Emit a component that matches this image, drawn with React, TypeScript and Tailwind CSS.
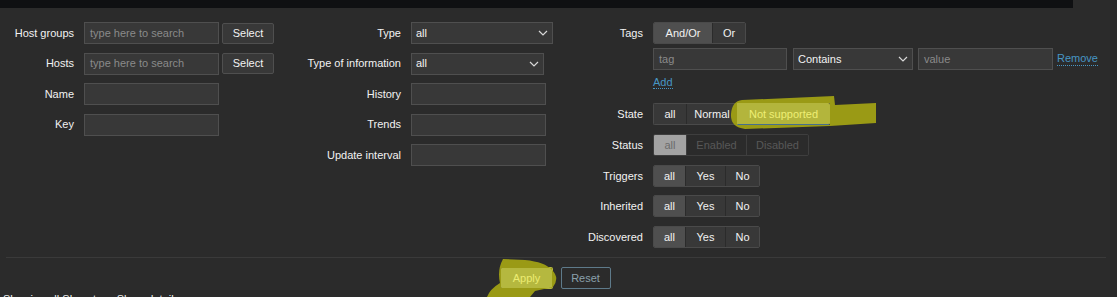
import React from 'react';

const label = 'text-right text-[#f2f2f2] whitespace-nowrap';

function TextBox({ w, placeholder }: { w: string; placeholder?: string }) {
  return (
    <div className={`${w} h-[22px] border border-[#4f4f4f] bg-[#383838] px-[5px] flex items-center text-[#8a8a8a]`}>
      {placeholder}
    </div>
  );
}

function Chevron() {
  return (
    <svg width="10" height="6" viewBox="0 0 10 6" className="shrink-0">
      <polyline points="1,1 5,5 9,1" fill="none" stroke="#d8d8d8" strokeWidth="1.2" />
    </svg>
  );
}

function Dropdown({ w, value }: { w: string; value: string }) {
  return (
    <div className={`${w} h-[22px] border border-[#4f4f4f] bg-[#383838] pl-[4px] pr-[4px] flex items-center justify-between text-[#f2f2f2]`}>
      <span>{value}</span>
      <Chevron />
    </div>
  );
}

function SelectBtn() {
  return (
    <div className="ml-[3px] w-[52px] h-[21px] border border-[#4f4f4f] bg-[#383838] rounded-[2px] flex items-center justify-center text-[#f2f2f2]">
      Select
    </div>
  );
}

type Seg = { text: string; w: string; active?: boolean };

function Segmented({ items, disabled }: { items: Seg[]; disabled?: boolean }) {
  return (
    <div className={`flex h-[22px] rounded-[2px] border ${disabled ? 'border-[#3e3e3e]' : 'border-[#4a4a4a]'} overflow-hidden w-fit`}>
      {items.map((s, i) => {
        let cls = 'bg-[#383838] text-[#f2f2f2]';
        if (s.active) cls = disabled ? 'bg-[#a3a3a3] text-[#6b6b6b]' : 'bg-[#4f4f4f] text-[#f2f2f2]';
        else if (disabled) cls = 'bg-[#2b2b2b] text-[#585858]';
        return (
          <div
            key={s.text}
            className={`${s.w} ${cls} ${i > 0 ? (disabled ? 'border-l border-[#3e3e3e]' : 'border-l border-[#2b2b2b]') : ''} flex items-center justify-center`}
          >
            {s.text}
          </div>
        );
      })}
    </div>
  );
}

const tri = (a: boolean) => [
  { text: 'all', w: 'w-[31px]', active: a },
  { text: 'Yes', w: 'w-[40px]' },
  { text: 'No', w: 'w-[34px]' },
];

export default function App() {
  return (
    <div className="relative w-[1117px] h-[297px] overflow-hidden bg-[#2b2b2b] font-['Liberation_Sans',Arial,sans-serif] text-[11px] leading-[13px]">
      <div className="h-[8px] w-[1073px] bg-[#0f1012]" />

      <div className="flex pt-[14px]">
        {/* left column */}
        <div className="w-[280px] grid grid-cols-[74px_auto] gap-x-[10px] gap-y-[8.5px] items-center content-start">
          <div className={label}>Host groups</div>
          <div className="flex items-center">
            <TextBox w="w-[135px]" placeholder="type here to search" />
            <SelectBtn />
          </div>
          <div className={label}>Hosts</div>
          <div className="flex items-center">
            <TextBox w="w-[135px]" placeholder="type here to search" />
            <SelectBtn />
          </div>
          <div className={label}>Name</div>
          <TextBox w="w-[135px]" />
          <div className={label}>Key</div>
          <TextBox w="w-[135px]" />
        </div>

        {/* middle column */}
        <div className="w-[280px] grid grid-cols-[121px_auto] gap-x-[10px] gap-y-[8.5px] items-center content-start">
          <div className={label}>Type</div>
          <Dropdown w="w-[142px]" value="all" />
          <div className={label}>Type of information</div>
          <Dropdown w="w-[133px]" value="all" />
          <div className={label}>History</div>
          <TextBox w="w-[135px]" />
          <div className={label}>Trends</div>
          <TextBox w="w-[135px]" />
          <div className={label}>Update interval</div>
          <TextBox w="w-[135px]" />
        </div>

        {/* right column */}
        <div className="flex flex-col">
          <div className="flex items-center">
            <div className={`w-[83px] mr-[10px] ${label}`}>Tags</div>
            <Segmented
              items={[
                { text: 'And/Or', w: 'w-[58px]', active: true },
                { text: 'Or', w: 'w-[33px]' },
              ]}
            />
          </div>
          <div className="flex items-center mt-[4px] ml-[93px]">
            <TextBox w="w-[134px]" placeholder="tag" />
            <div className="ml-[6px]">
              <Dropdown w="w-[120px]" value="Contains" />
            </div>
            <div className="ml-[5px]">
              <TextBox w="w-[135px]" placeholder="value" />
            </div>
            <span className="ml-[4px] text-[#4796c4] border-b border-dotted border-[#4796c4] leading-[13px]">Remove</span>
          </div>
          <div className="mt-[6px] ml-[93px] h-[16px]">
            <span className="text-[#4796c4] border-b border-dotted border-[#4796c4] leading-[13px]">Add</span>
          </div>

          <div className="flex items-center mt-[11px]">
            <div className={`w-[83px] mr-[10px] ${label}`}>State</div>
            <div className="flex h-[22px]">
              <div className="flex h-[22px] rounded-l-[2px] border border-r-0 border-[#4a4a4a] overflow-hidden">
                <div className="w-[32px] bg-[#383838] text-[#f2f2f2] flex items-center justify-center">all</div>
                <div className="w-[51px] bg-[#383838] text-[#f2f2f2] border-l border-[#2b2b2b] flex items-center justify-center">Normal</div>
              </div>
              <div className="w-[93px] h-[22px] bg-[#b3b53c] text-[#eeee74] border border-[#b3b53c] border-b-[#466f8e] rounded-r-[2px] flex items-center justify-center">
                Not supported
              </div>
            </div>
          </div>
          <div className="flex items-center mt-[9px]">
            <div className={`w-[83px] mr-[10px] ${label}`}>Status</div>
            <Segmented
              disabled
              items={[
                { text: 'all', w: 'w-[32px]', active: true },
                { text: 'Enabled', w: 'w-[60px]' },
                { text: 'Disabled', w: 'w-[62px]' },
              ]}
            />
          </div>
          <div className="flex items-center mt-[9px]">
            <div className={`w-[83px] mr-[10px] ${label}`}>Triggers</div>
            <Segmented items={tri(true)} />
          </div>
          <div className="flex items-center mt-[8px]">
            <div className={`w-[83px] mr-[10px] ${label}`}>Inherited</div>
            <Segmented items={tri(true)} />
          </div>
          <div className="flex items-center mt-[9px]">
            <div className={`w-[83px] mr-[10px] ${label}`}>Discovered</div>
            <Segmented items={tri(true)} />
          </div>
        </div>
      </div>

      {/* footer */}
      <div className="mt-[9px] mx-[6px] w-[1100px] h-px bg-[#3a3a3a]" />
      <div className="flex justify-center gap-[8px] mt-[9px] pr-[6px]">
        <div className="w-[52px] h-[22px] rounded-[2px] bg-[#b5b83f] text-[#ecec72] flex items-center justify-center">Apply</div>
        <div className="w-[50px] h-[22px] rounded-[2px] border border-[#5e7a8a] text-[#8aa0ab] flex items-center justify-center">Reset</div>
      </div>
      <div className="mt-[4px] pl-[3px] text-[#f2f2f2] whitespace-nowrap">Showing all   Show tags   Show details</div>

      {/* highlighter marks (holes left where the buttons show through) */}
      <svg className="absolute inset-0 pointer-events-none" width="1117" height="297">
        <path
          d="M 742 100 L 834 96 L 835 105 L 876 103 L 876 123 L 830 126 L 745 129 Q 730 127 731 114 Q 732 101 742 100 Z M 737 103 L 830 103 L 830 125 L 737 125 Z"
          fill="#9a9a15"
          fillRule="evenodd"
        />
        <path
          d="M 503 259 L 525 260 Q 545 262 552 270 Q 560 278 553 287 L 535 291 L 530 297 L 487 297 Q 490 289 500 283 Q 497 270 503 259 Z M 501 268 L 552 268 L 552 288 L 501 288 Z"
          fill="#9a9a15"
          fillRule="evenodd"
        />
      </svg>
    </div>
  );
}
